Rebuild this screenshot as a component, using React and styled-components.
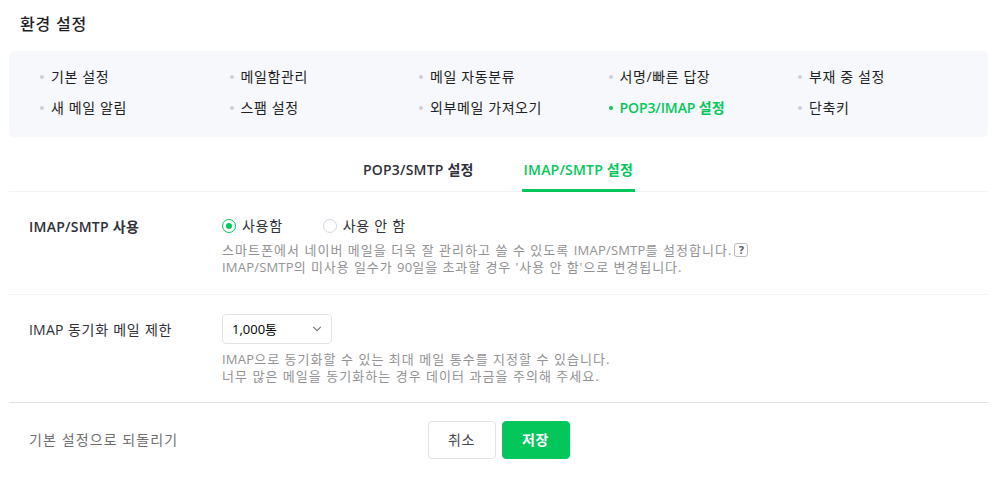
import React, { useState } from 'react';
import styled, { createGlobalStyle } from 'styled-components'

const menus = [
    { name: '기본 설정' },
    { name: '메일함관리' },
    { name: '메일 자동분류' },
    { name: '서명/빠른 답장' },
    { name: '부재 중 설정' },
    { name: '새 메일 알림' },
    { name: '스팸 설정' },
    { name: '외부메일 가져오기' },
    { name: 'POP3/IMAP 설정', active: true },
    { name: '단축키' },
];

export default function App(){

    const [tab, setTab] = useState('imap');
    const [use, setUse] = useState(true);

    return(
        <>
        <GlobalStyle />
        <Page>
            <Title>환경 설정</Title>
            <MenuBox>
                {menus.map(({ name, active }) => (
                    <MenuItem key={name} $active={active}>{name}</MenuItem>
                ))}
            </MenuBox>

            <Tabs>
                <Tab $active={tab === 'pop3'} onClick={() => setTab('pop3')}>POP3/SMTP 설정</Tab>
                <Tab $active={tab === 'imap'} onClick={() => setTab('imap')}>IMAP/SMTP 설정</Tab>
            </Tabs>

            <Row $height="103px" $top="24px">
                <Label $bold>IMAP/SMTP 사용</Label>
                <Content>
                    <RadioGroup>
                        <RadioLabel onClick={() => setUse(true)}><Radio $checked={use} />사용함</RadioLabel>
                        <RadioLabel onClick={() => setUse(false)}><Radio $checked={!use} />사용 안 함</RadioLabel>
                    </RadioGroup>
                    <Desc $top="6px">
                        <DescLine>
                            스마트폰에서 네이버 메일을 더욱 잘 관리하고 쓸 수 있도록 <Latin>IMAP/SMTP</Latin>를 설정합니다.
                        </DescLine>
                        <HelpButton>?</HelpButton>
                    </Desc>
                    <Desc>
                        <DescLine $spacing="0.94px">
                            <Latin>IMAP/SMTP</Latin>의 미사용 일수가 <Latin>90</Latin>일을 초과할 경우 '사용 안 함'으로 변경됩니다.
                        </DescLine>
                    </Desc>
                </Content>
            </Row>

            <Row $height="108px" $top="19px" $dark>
                <Label $top="5px"><Latin>IMAP</Latin> 동기화 메일 제한</Label>
                <Content>
                    <Select>
                        <span>1,000통</span>
                        <svg width="10" height="6" viewBox="0 0 10 6" fill="none" stroke="#777" strokeWidth="1.2">
                            <path d="M1.2 0.9 5 4.7 8.8 0.9" />
                        </svg>
                    </Select>
                    <Desc $top="7px">
                        <DescLine><Latin>IMAP</Latin>으로 동기화할 수 있는 최대 메일 통수를 지정할 수 있습니다.</DescLine>
                    </Desc>
                    <Desc>
                        <DescLine>너무 많은 메일을 동기화하는 경우 데이터 과금을 주의해 주세요.</DescLine>
                    </Desc>
                </Content>
            </Row>

            <Footer>
                <ResetButton>기본 설정으로 되돌리기</ResetButton>
                <Button>취소</Button>
                <Button $primary>저장</Button>
            </Footer>
        </Page>
        </>
    )
}

const GlobalStyle = createGlobalStyle`
* {
    box-sizing: border-box;
}

body {
    margin: 0;
    background: #ffffff;
    color: #1e1e23;
    font-family: 'Open Sans', 'Noto Sans CJK KR', sans-serif;
    font-size: 14px;
}

button {
    padding: 0;
    border: 0;
    background: none;
    color: inherit;
    font: inherit;
    cursor: pointer;
}
`

const Page = styled.div`
width: 1002px;
height: 483px;
padding: 0 14px 0 9px;
overflow: hidden;
white-space: nowrap;
`

const Title = styled.h1`
height: 51px;
margin: 0;
padding: 12px 0 0 11px;
font-size: 16px;
font-weight: 500;
line-height: 24px;
letter-spacing: 0.8px;
`

const MenuBox = styled.ul`
display: grid;
grid-template-columns: repeat(5, 189.5px);
grid-auto-rows: 31px;
height: 86px;
margin: 0;
padding: 11px 0 0 31px;
border-radius: 5px;
background: #f7f8fc;
list-style: none;
`

const MenuItem = styled.li`
display: flex;
align-items: center;
gap: 7px;
color: ${({ $active }) => $active ? '#03c75a' : '#1e1e23'};
font-weight: ${({ $active }) => $active ? 600 : 400};
letter-spacing: ${({ $active }) => $active ? '-0.1px' : '0.6px'};
line-height: 20px;
padding-bottom: 1px;

&::before {
    content: '';
    width: 4px;
    height: 4px;
    border-radius: 50%;
    background: ${({ $active }) => $active ? '#03c75a' : '#cdced6'};
}
`

const Tabs = styled.div`
display: flex;
justify-content: center;
gap: 46px;
height: 55px;
padding-right: 1px;
border-bottom: 1px solid #f3f3f5;
`

const Tab = styled.button`
height: 55px;
padding: 11px 2px 0;
border-bottom: 3px solid ${({ $active }) => $active ? '#03c75a' : 'transparent'};
color: ${({ $active }) => $active ? '#03c75a' : '#303038'};
font-weight: 600;
letter-spacing: 0.2px;
`

const Row = styled.div`
display: flex;
height: ${({ $height }) => $height};
padding: ${({ $top }) => $top} 0 0 20px;
border-bottom: 1px solid ${({ $dark }) => $dark ? '#e0e0e0' : '#f3f3f5'};
`

const Label = styled.div`
flex: 0 0 193px;
padding-top: ${({ $top }) => $top || 0};
color: #303038;
font-weight: ${({ $bold }) => $bold ? 600 : 400};
line-height: 21px;
letter-spacing: ${({ $bold }) => $bold ? '0.25px' : '0.75px'};
`

const Latin = styled.span`
letter-spacing: 0.2px;
`

const Content = styled.div`
flex: 1;
`

const RadioGroup = styled.div`
display: flex;
gap: 40px;
height: 20px;
`

const RadioLabel = styled.label`
display: flex;
align-items: center;
gap: 6px;
color: #303038;
line-height: 20px;
letter-spacing: 0.7px;
`

const Radio = styled.span`
display: flex;
align-items: center;
justify-content: center;
width: 14px;
height: 14px;
border: 1px solid ${({ $checked }) => $checked ? '#03c75a' : '#d5d6e3'};
border-radius: 50%;

&::after {
    content: '';
    width: 6px;
    height: 6px;
    border-radius: 50%;
    background: ${({ $checked }) => $checked ? '#03c75a' : 'transparent'};
}
`

const Desc = styled.div`
display: flex;
align-items: center;
gap: 2px;
height: 17px;
margin-top: ${({ $top }) => $top || 0};
color: #929294;
font-size: 13px;
line-height: 17px;
`

const DescLine = styled.span`
letter-spacing: ${({ $spacing }) => $spacing || '1.04px'};
`

const HelpButton = styled.button`
width: 14px;
height: 14px;
margin-bottom: 1px;
border: 1px solid #bbbbbb;
border-radius: 3px;
color: #555555;
font-size: 11px;
font-weight: 700;
line-height: 12px;
`

const Select = styled.div`
display: flex;
align-items: center;
justify-content: space-between;
width: 110px;
height: 30px;
padding: 0 9px;
border: 1px solid #e3e3e5;
border-radius: 4px;
color: #000000;
font-size: 13px;
line-height: 18px;

span {
    padding-bottom: 1px;
}
`

const Footer = styled.div`
display: flex;
gap: 6px;
padding-top: 18px;
`

const ResetButton = styled.button`
width: 413px;
height: 38px;
padding: 0 0 2px 20px;
color: #6f6f72;
text-align: left;
letter-spacing: 1.1px;
`

const Button = styled.button`
width: 68px;
height: 38px;
padding: 0 1px 2px 0;
border: 1px solid ${({ $primary }) => $primary ? '#03c75a' : '#e3e3e5'};
border-radius: 4px;
background: ${({ $primary }) => $primary ? '#03c75a' : '#ffffff'};
color: ${({ $primary }) => $primary ? '#ffffff' : '#47474d'};
font-weight: ${({ $primary }) => $primary ? 700 : 400};
letter-spacing: 0.7px;
`
